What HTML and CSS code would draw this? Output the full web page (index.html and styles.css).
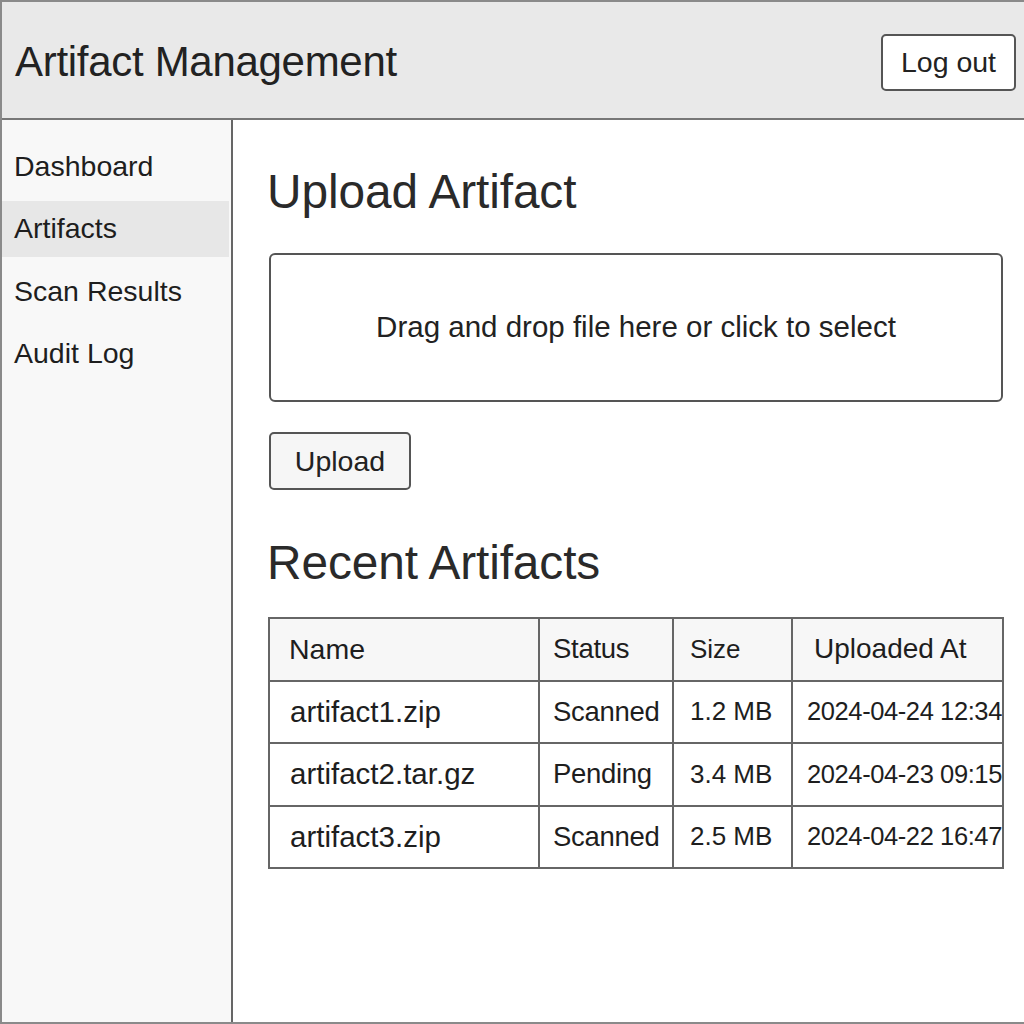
FILE: index.html
```html
<!DOCTYPE html>
<html lang="en">
<head>
<meta charset="utf-8">
<title>Artifact Management</title>
<link rel="stylesheet" href="styles.css">
</head>
<body>
<div class="app">
  <header class="topbar">
    <h1 class="brand">Artifact Management</h1>
    <button class="btn logout">Log out</button>
  </header>
  <div class="body">
    <nav class="sidebar">
      <a class="nav-item">Dashboard</a>
      <a class="nav-item active">Artifacts</a>
      <a class="nav-item">Scan Results</a>
      <a class="nav-item">Audit Log</a>
    </nav>
    <main class="main">
      <h2 class="section-title">Upload Artifact</h2>
      <div class="dropzone">Drag and drop file here or click to select</div>
      <button class="btn upload">Upload</button>
      <h2 class="section-title recent">Recent Artifacts</h2>
      <table class="grid">
        <colgroup>
          <col class="c-name"><col class="c-status"><col class="c-size"><col class="c-date">
        </colgroup>
        <thead>
          <tr><th>Name</th><th class="status">Status</th><th class="size">Size</th><th class="date">Uploaded At</th></tr>
        </thead>
        <tbody>
          <tr><td>artifact1.zip</td><td class="status">Scanned</td><td class="size">1.2 MB</td><td class="date">2024-04-24 12:34</td></tr>
          <tr><td>artifact2.tar.gz</td><td class="status">Pending</td><td class="size">3.4 MB</td><td class="date">2024-04-23 09:15</td></tr>
          <tr><td>artifact3.zip</td><td class="status">Scanned</td><td class="size">2.5 MB</td><td class="date">2024-04-22 16:47</td></tr>
        </tbody>
      </table>
    </main>
  </div>
</div>
</body>
</html>
```
FILE: styles.css
```css
* { box-sizing: border-box; }
html, body { margin: 0; padding: 0; }
body {
  font-family: "Liberation Sans", Arial, sans-serif;
  color: #222;
  background: #fff;
}
.app {
  width: 1024px;
  height: 1024px;
  border: 2px solid #8a8a8a;
  border-right: none;
  display: flex;
  flex-direction: column;
  overflow: hidden;
}
.topbar {
  height: 118px;
  flex: none;
  background: #e9e9e9;
  border-bottom: 2px solid #777;
  display: flex;
  align-items: center;
  justify-content: space-between;
  padding: 0 8px 0 13px;
}
.brand {
  margin: 0;
  font-size: 42px;
  font-weight: normal;
  letter-spacing: -0.3px;
  color: #222;
  padding-top: 4px;
}
.btn {
  font-family: inherit;
  color: #222;
  background: #fff;
  border: 2px solid #555;
  border-radius: 5px;
  cursor: pointer;
}
.logout {
  width: 135px;
  height: 57px;
  font-size: 28.5px;
  padding: 0;
  margin-top: 4px;
}
.body {
  flex: 1;
  display: flex;
  min-height: 0;
}
.sidebar {
  width: 231px;
  flex: none;
  background: #f8f8f8;
  border-right: 2px solid #666;
  padding-top: 18px;
  display: flex;
  flex-direction: column;
  gap: 6.5px;
}
.nav-item {
  height: 56px;
  display: flex;
  align-items: center;
  padding-left: 12px;
  margin-right: 2px;
  font-size: 28.5px;
  color: #1e1e1e;
}
.nav-item.active { background: #e7e7e7; }
.main {
  flex: 1;
  padding: 47px 0 0 36px;
  min-width: 0;
}
.section-title {
  margin: 0;
  margin-left: -2px;
  font-size: 47.8px;
  line-height: 50px;
  font-weight: normal;
  letter-spacing: -0.1px;
  color: #2a2a2a;
}
.dropzone {
  margin-top: 36px;
  width: 734px;
  height: 149px;
  border: 2px solid #555;
  border-radius: 6px;
  display: flex;
  align-items: center;
  justify-content: center;
  font-size: 29.5px;
  padding-bottom: 2px;
}
.upload {
  display: block;
  margin-top: 30px;
  width: 142px;
  height: 58px;
  font-size: 28.5px;
  padding: 0;
  background: #f6f6f6;
}
.recent { margin-top: 48px; }
.grid {
  margin-top: 29px;
  margin-left: -1px;
  width: 734px;
  table-layout: fixed;
  border-collapse: collapse;
  font-size: 28.5px;
}
.c-name { width: 270px; }
.c-status { width: 134px; }
.c-size { width: 119px; }
.c-date { width: 211px; }
.grid th, .grid td {
  border: 2px solid #666;
  height: 62.5px;
  padding: 0 0 0 19px;
  text-align: left;
  font-weight: normal;
  white-space: nowrap;
  overflow: hidden;
  color: #1e1e1e;
}
.grid td:first-child { padding-left: 20px; font-size: 29.5px; }
.grid th { background: #f7f7f7; }
.grid .status { padding-left: 13px; font-size: 27.5px; letter-spacing: -0.3px; }
.grid .size { padding-left: 16px; font-size: 26px; }
.grid th.date { padding-left: 21px; font-size: 28px; }
.grid td.date { padding-left: 14px; font-size: 25.5px; letter-spacing: -0.4px; }
```
